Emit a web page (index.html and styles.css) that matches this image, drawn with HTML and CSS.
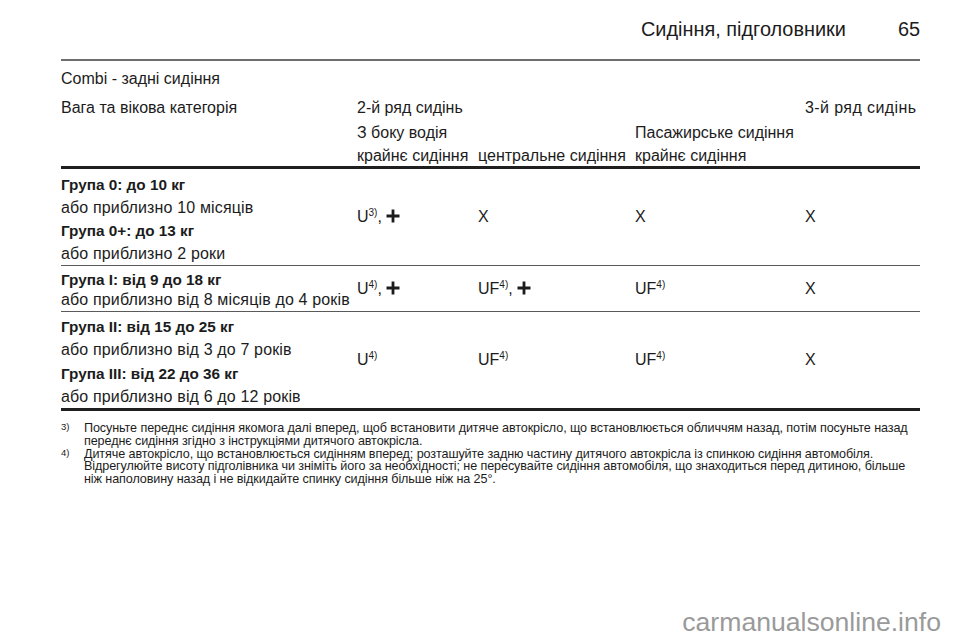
FILE: index.html
```html
<!DOCTYPE html>
<html lang="uk">
<head>
<meta charset="utf-8">
<title>Сидіння, підголовники 65</title>
<link rel="stylesheet" href="styles.css">
</head>
<body>
<div class="page">
  <header class="page-head">
    <span class="page-title">Сидіння, підголовники</span>
    <span class="page-num">65</span>
  </header>
  <div class="content">
    <div class="caption">Combi - задні сидіння</div>
    <table class="seats">
      <colgroup>
        <col class="c1"><col class="c2"><col class="c3"><col class="c4"><col class="c5">
      </colgroup>
      <thead>
        <tr class="h1">
          <th>Вага та вікова категорія</th>
          <th colspan="3">2-й ряд сидінь</th>
          <th>3-й ряд сидінь</th>
        </tr>
        <tr class="h2">
          <th></th>
          <th colspan="2">З боку водія</th>
          <th>Пасажирське сидіння</th>
          <th></th>
        </tr>
        <tr class="h3">
          <th></th>
          <th>крайнє сидіння</th>
          <th>центральне сидіння</th>
          <th>крайнє сидіння</th>
          <th></th>
        </tr>
      </thead>
      <tbody>
        <tr class="r1">
          <td class="cat">
            <div class="g">Група 0: до 10 кг</div>
            <div>або приблизно 10 місяців</div>
            <div class="g">Група 0+: до 13 кг</div>
            <div>або приблизно 2 роки</div>
          </td>
          <td>U<sup>3)</sup>, <svg class="plus" viewBox="0 0 14 14"><path d="M7 0.5V13.5M0.5 7H13.5"/></svg></td>
          <td>X</td>
          <td>X</td>
          <td>X</td>
        </tr>
        <tr class="r2">
          <td class="cat">
            <div class="g">Група I: від 9 до 18 кг</div>
            <div>або приблизно від 8 місяців до 4 років</div>
          </td>
          <td>U<sup>4)</sup>, <svg class="plus" viewBox="0 0 14 14"><path d="M7 0.5V13.5M0.5 7H13.5"/></svg></td>
          <td>UF<sup>4)</sup>, <svg class="plus" viewBox="0 0 14 14"><path d="M7 0.5V13.5M0.5 7H13.5"/></svg></td>
          <td>UF<sup>4)</sup></td>
          <td>X</td>
        </tr>
        <tr class="r3">
          <td class="cat">
            <div class="g">Група II: від 15 до 25 кг</div>
            <div>або приблизно від 3 до 7 років</div>
            <div class="g">Група III: від 22 до 36 кг</div>
            <div>або приблизно від 6 до 12 років</div>
          </td>
          <td>U<sup>4)</sup></td>
          <td>UF<sup>4)</sup></td>
          <td>UF<sup>4)</sup></td>
          <td>X</td>
        </tr>
      </tbody>
    </table>
    <div class="notes">
      <div class="note">
        <span class="mark">3)</span>
        <p>Посуньте переднє сидіння якомога далі вперед, щоб встановити дитяче автокрісло, що встановлюється обличчям назад, потім посуньте назад переднє сидіння згідно з інструкціями дитячого автокрісла.</p>
      </div>
      <div class="note">
        <span class="mark">4)</span>
        <p>Дитяче автокрісло, що встановлюється сидінням вперед; розташуйте задню частину дитячого автокрісла із спинкою сидіння автомобіля. Відрегулюйте висоту підголівника чи зніміть його за необхідності; не пересувайте сидіння автомобіля, що знаходиться перед дитиною, більше ніж наполовину назад і не відкидайте спинку сидіння більше ніж на 25°.</p>
      </div>
    </div>
  </div>
  <footer class="watermark">carmanualsonline.info</footer>
</div>
</body>
</html>
```

FILE: styles.css
```css
* { box-sizing: border-box; }
html, body {
  margin: 0;
  padding: 0;
  background: #fff;
}
body {
  font-family: "Liberation Sans", Arial, sans-serif;
  color: #1c1c1c;
  width: 960px;
  height: 642px;
  overflow: hidden;
}
.page {
  position: relative;
  height: 642px;
  padding: 0 40px 0 61px;
}
.page-head {
  display: flex;
  justify-content: flex-end;
  align-items: baseline;
  gap: 52px;
  height: 61px;
  padding-top: 18px;
  border-bottom: 2px solid #6e6e6e;
  font-size: 19.9px;
}
.caption {
  font-size: 16px;
  line-height: 20px;
  margin-top: 8px;
}
.seats {
  width: 859px;
  table-layout: fixed;
  border-collapse: collapse;
  font-size: 16px;
}
.c1 { width: 296px; }
.c2 { width: 121px; }
.c3 { width: 157px; }
.c4 { width: 170px; }
.c5 { width: 115px; }
.seats th {
  font-weight: normal;
  text-align: left;
  padding: 0;
  white-space: nowrap;
  line-height: 25px;
}
.seats tr.h1 th { padding-top: 6px; line-height: 26px; }
.seats tr.h1 th:last-child { letter-spacing: 0.4px; }
.seats tr.h2 th { line-height: 24px; }
.seats tr.h3 th { line-height: 21px; }
.seats thead tr.h3 { border-bottom: 3px solid #1f1f1f; }
.seats td {
  padding: 0;
  vertical-align: middle;
  white-space: nowrap;
}
.seats td.cat {
  letter-spacing: 0.15px;
}
.seats tr.r1 td.cat { padding: 4px 0 0; line-height: 23px; }
.seats tr.r2 td.cat { padding: 4px 0 1px; line-height: 20px; }
.seats tr.r3 td.cat { padding: 3px 0 0; line-height: 23.3px; }
.seats tr.r1, .seats tr.r2 { border-bottom: 1.5px solid #5a5a5a; }
.seats tr.r3 { border-bottom: 3px solid #1f1f1f; }
.g { font-weight: bold; font-size: 15.3px; letter-spacing: 0; }
sup {
  font-size: 10px;
  line-height: 0;
  vertical-align: 6px;
}
.plus {
  width: 14px;
  height: 14px;
  vertical-align: -1px;
  fill: none;
  stroke: #1c1c1c;
  stroke-width: 2.8;
}
.notes {
  margin-top: 11px;
  font-size: 12.6px;
  line-height: 12.75px;
  letter-spacing: -0.1px;
}
.note {
  display: flex;
}
.mark {
  flex: 0 0 23px;
  font-size: 9.5px;
  line-height: 10px;
}
.note p {
  margin: 0;
  flex: 1;
}
.watermark {
  position: absolute;
  right: 19px;
  bottom: 4px;
  font-size: 26.6px;
  color: #9a9a9a;
}
```
